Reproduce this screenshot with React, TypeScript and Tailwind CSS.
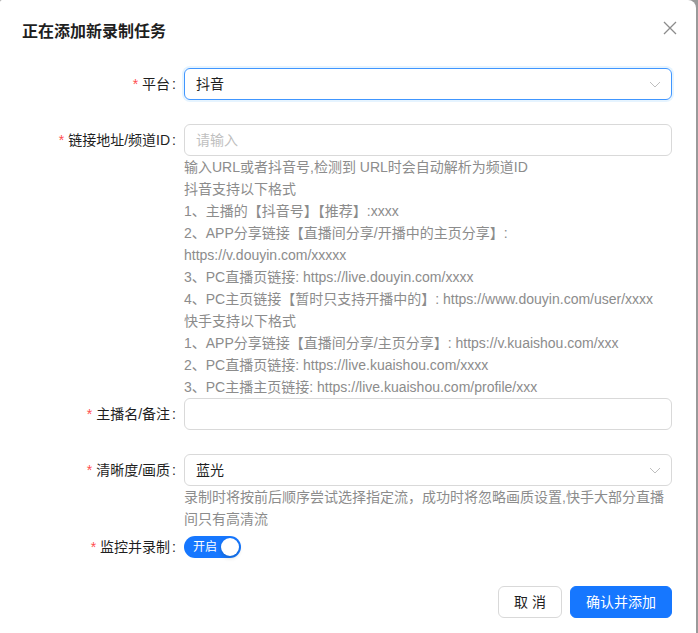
import React from 'react'

const font = { fontFamily: '"Liberation Sans", "Noto Sans CJK SC", sans-serif' }

function Label({ text }: { text: string }) {
  return (
    <div className="w-[184px] shrink-0 flex justify-end items-center h-[32px] text-[14px] text-[#1f1f1f]">
      <span className="text-[#ff4d4f] mr-[4px]">*</span>
      <span>{text}</span>
      <span className="ml-[2px] mr-[8px]">:</span>
    </div>
  )
}

function Chevron() {
  return (
    <svg width="12" height="12" viewBox="0 0 12 12" fill="none" stroke="#bfbfbf" strokeWidth="1">
      <path d="M1 4l5 5 5-5" />
    </svg>
  )
}

function Select({ value, focused }: { value: string; focused?: boolean }) {
  return (
    <div
      className={
        focused
          ? 'h-[32px] rounded-[6px] border border-[#4096ff] shadow-[0_0_0_2px_rgba(5,145,255,0.1)] flex items-center pl-[11px] pr-[10px] text-[14px] text-[#1f1f1f]'
          : 'h-[32px] rounded-[6px] border border-[#d9d9d9] flex items-center pl-[11px] pr-[10px] text-[14px] text-[#1f1f1f]'
      }
    >
      <span className="flex-1">{value}</span>
      <Chevron />
    </div>
  )
}

const douyinHelp = [
  '输入URL或者抖音号,检测到 URL时会自动解析为频道ID',
  '抖音支持以下格式',
  '1、主播的【抖音号】【推荐】:xxxx',
  '2、APP分享链接【直播间分享/开播中的主页分享】:',
  'https://v.douyin.com/xxxxx',
  '3、PC直播页链接: https://live.douyin.com/xxxx',
  '4、PC主页链接【暂时只支持开播中的】: https://www.douyin.com/user/xxxx',
  '快手支持以下格式',
  '1、APP分享链接【直播间分享/主页分享】: https://v.kuaishou.com/xxx',
  '2、PC直播页链接: https://live.kuaishou.com/xxxx',
  '3、PC主播主页链接: https://live.kuaishou.com/profile/xxx',
]

export default function App() {
  return (
    <div className="w-[698px] h-[633px] overflow-hidden bg-[#9a9a9a] flex" style={font}>
      <div className="relative w-[696px] h-[660px] bg-white rounded-tr-[8px] rounded-tl-[2px]">
        {/* header */}
        <div className="pt-[20px] px-[22px]">
          <h2 className="text-[16px] leading-[24px] font-semibold text-[#1f1f1f]">正在添加新录制任务</h2>
        </div>
        <button className="absolute top-[21px] right-[19px] w-[14px] h-[14px] flex items-center justify-center">
          <svg width="14" height="14" viewBox="0 0 14 14" stroke="#8c8c8c" strokeWidth="1.3">
            <path d="M1 1l12 12M13 1L1 13" />
          </svg>
        </button>

        {/* form */}
        <div className="mt-[24px] pr-[24px] flex flex-col">
          <div className="flex mb-[24px]">
            <Label text="平台" />
            <div className="flex-1">
              <Select value="抖音" focused />
            </div>
          </div>

          <div className="flex">
            <Label text="链接地址/频道ID" />
            <div className="flex-1">
              <input
                readOnly
                placeholder="请输入"
                className="w-full h-[32px] rounded-[6px] border border-[#d9d9d9] px-[11px] text-[14px] outline-none placeholder:text-[#bfbfbf]"
              />
              <div className="text-[14px] leading-[22px] text-[#8c8c8c]">
                {douyinHelp.map((line) => (
                  <div key={line} className="whitespace-nowrap">{line}</div>
                ))}
              </div>
            </div>
          </div>

          <div className="flex mb-[24px]">
            <Label text="主播名/备注" />
            <div className="flex-1">
              <input
                readOnly
                className="w-full h-[32px] rounded-[6px] border border-[#d9d9d9] px-[11px] text-[14px] outline-none"
              />
            </div>
          </div>

          <div className="flex">
            <Label text="清晰度/画质" />
            <div className="flex-1">
              <Select value="蓝光" />
              <div className="text-[14px] leading-[22px] text-[#8c8c8c]">
                录制时将按前后顺序尝试选择指定流，成功时将忽略画质设置,快手大部分直播间只有高清流
              </div>
            </div>
          </div>

          <div className="flex mt-[1px]">
            <Label text="监控并录制" />
            <div className="flex-1 flex items-center h-[32px]">
              <div className="relative h-[22px] w-[57px] rounded-full bg-[#1677ff] flex items-center">
                <span className="pl-[9px] text-[12px] leading-[22px] text-white">开启</span>
                <span className="absolute right-[2px] top-[2px] w-[18px] h-[18px] rounded-full bg-white shadow-[0_2px_4px_rgba(0,35,11,0.2)]" />
              </div>
            </div>
          </div>
        </div>

        {/* footer */}
        <div className="mt-[23px] pr-[24px] flex justify-end gap-[8px]">
          <button className="h-[32px] px-[15px] rounded-[6px] border border-[#d9d9d9] bg-white text-[14px] text-[#1f1f1f]">
            取 消
          </button>
          <button className="h-[32px] px-[15px] rounded-[6px] border border-[#1677ff] bg-[#1677ff] text-[14px] text-white">
            确认并添加
          </button>
        </div>
      </div>
    </div>
  )
}
